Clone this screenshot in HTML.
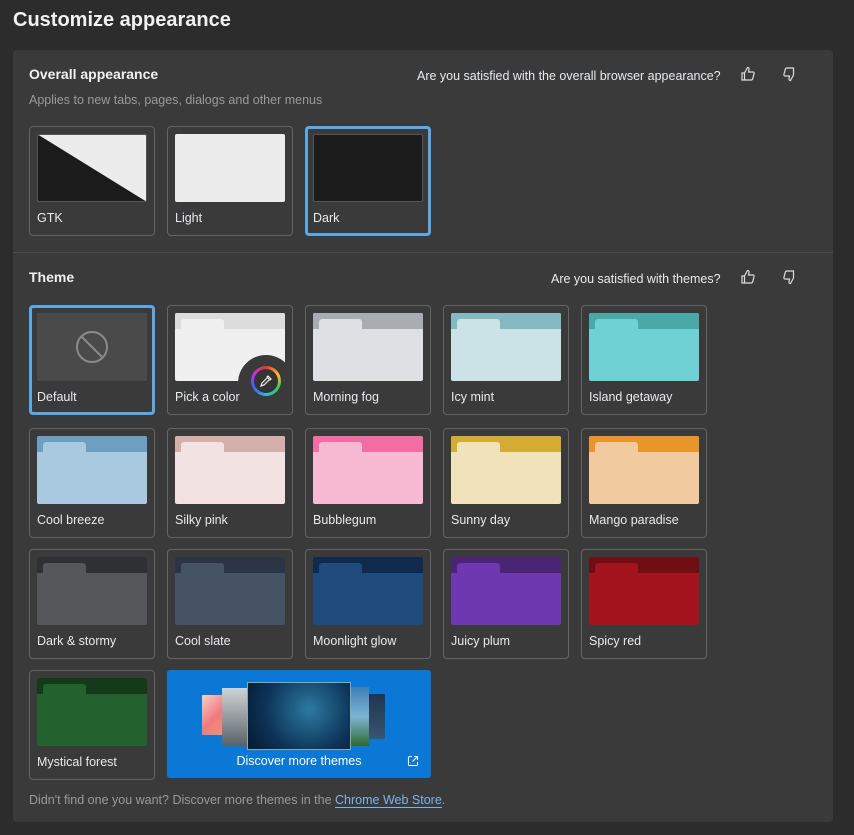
<!DOCTYPE html>
<html><head><style>
*{box-sizing:border-box;margin:0;padding:0}
body{width:854px;height:835px;background:#2c2c2c;font-family:"Liberation Sans",sans-serif;color:#e8eaed;position:relative;overflow:hidden}
.abs{position:absolute}
h1{position:absolute;left:13px;top:9px;font-size:20px;font-weight:bold;color:#f1f1f1}
.card{position:absolute;left:13px;top:50px;width:820px;height:772px;background:#3a3a3a;border-radius:4px}
.t{position:absolute;width:126px;height:110px;border:1px solid #646464;border-radius:4px}
.t.sel{border:3px solid #5aa9e6}
.p{position:absolute;left:7px;top:7px;width:110px;height:68px;border-radius:2px;overflow:hidden}
.t.sel .p{left:5px;top:5px}
.l{position:absolute;left:7px;top:84px;font-size:12.5px;color:#e8eaed}
.t.sel .l{left:5px;top:82px}
.band{position:absolute;left:0;top:0;width:110px;height:16px}
.tab{position:absolute;left:6px;top:6px;width:43px;height:14px;border-radius:3px 3px 0 0}
.q{position:absolute;font-size:12.5px;color:#e8eaed}
.ic{position:absolute}
</style></head><body>
<h1>Customize appearance</h1>
<div class="card"></div>
<div class="abs" style="left:29px;top:66px;font-size:14px;font-weight:bold;color:#f1f1f1">Overall appearance</div>
<div class="abs" style="left:29px;top:93px;font-size:12.5px;color:#9a9a9a">Applies to new tabs, pages, dialogs and other menus</div>
<div class="q" style="left:417px;top:69px">Are you satisfied with the overall browser appearance?</div>
<div class="q" style="left:551px;top:272px">Are you satisfied with themes?</div>
<svg class="ic" style="left:740px;top:66px" width="16" height="16" viewBox="0 0 16 16" fill="none" stroke="#ddd" stroke-width="1.2"><path d="M2 7h2.5v7H2zM4.5 7l3-5.5c1.3 0 1.8.8 1.5 2L8.5 6H13c.8 0 1.3.7 1.1 1.4l-1.4 5.3c-.2.8-.8 1.3-1.6 1.3H4.5"/></svg>
<svg class="ic" style="left:782px;top:66px" width="16" height="16" viewBox="0 0 16 16" fill="none" stroke="#ddd" stroke-width="1.2"><g transform="rotate(180 8 8)"><path d="M4.5 7l3-5.5c1.3 0 1.8.8 1.5 2L8.5 6H13c.8 0 1.3.7 1.1 1.4l-1.4 5.3c-.2.8-.8 1.3-1.6 1.3H4.5V7"/></g></svg>
<svg class="ic" style="left:740px;top:269px" width="16" height="16" viewBox="0 0 16 16" fill="none" stroke="#ddd" stroke-width="1.2"><path d="M2 7h2.5v7H2zM4.5 7l3-5.5c1.3 0 1.8.8 1.5 2L8.5 6H13c.8 0 1.3.7 1.1 1.4l-1.4 5.3c-.2.8-.8 1.3-1.6 1.3H4.5"/></svg>
<svg class="ic" style="left:782px;top:269px" width="16" height="16" viewBox="0 0 16 16" fill="none" stroke="#ddd" stroke-width="1.2"><g transform="rotate(180 8 8)"><path d="M4.5 7l3-5.5c1.3 0 1.8.8 1.5 2L8.5 6H13c.8 0 1.3.7 1.1 1.4l-1.4 5.3c-.2.8-.8 1.3-1.6 1.3H4.5V7"/></g></svg>

<div class="t" style="left:29px;top:126px"><div class="p" style="background:#ececec;border:1px solid #555"><svg width="110" height="68" style="position:absolute;left:-1px;top:-1px"><polygon points="0,0 110,68 0,68" fill="#1b1b1b"/></svg></div><div class="l">GTK</div></div>
<div class="t" style="left:167px;top:126px"><div class="p" style="background:#ececec"></div><div class="l">Light</div></div>
<div class="t sel" style="left:305px;top:126px"><div class="p" style="background:#1c1c1c;border:1px solid #555"></div><div class="l">Dark</div></div>

<div class="abs" style="left:13px;top:252px;width:820px;height:1px;background:#4c4c4c"></div>
<div class="abs" style="left:29px;top:269px;font-size:14px;font-weight:bold;color:#f1f1f1">Theme</div>

<div class="t sel" style="left:29px;top:305px"><div class="p" style="background:#4a4a4a"><svg width="110" height="68"><circle cx="55" cy="34" r="15" fill="none" stroke="#8a8a8a" stroke-width="2"/><line x1="44.5" y1="23.5" x2="65.5" y2="44.5" stroke="#8a8a8a" stroke-width="2"/></svg></div><div class="l">Default</div></div>

<div class="t" style="left:167px;top:305px"><div class="p" style="background:#f0f0f0"><div class="band" style="background:#dcdcdc"></div><div class="tab" style="background:#f0f0f0"></div>
<div class="abs" style="left:63px;top:42px;width:56px;height:56px;border-radius:50%;background:#3a3a3a"></div></div>
<div class="abs" style="left:83px;top:60px;width:30px;height:30px;border-radius:50%;background:conic-gradient(#e33,#fb3,#3c5,#3bd,#36e,#b3e,#e33)"></div>
<div class="abs" style="left:86px;top:63px;width:24px;height:24px;border-radius:50%;background:#333"></div>
<svg class="ic" style="left:91px;top:68px" width="14" height="14" viewBox="0 0 14 14" fill="none" stroke="#eee" stroke-width="1.2"><path d="M9 2l3 3-1 1-3-3zM8 4L3 9l-1 3 3-1 5-5"/></svg>
<div class="l">Pick a color</div></div>

<div class="t" style="left:305px;top:305px"><div class="p" style="background:#dfe0e3"><div class="band" style="background:#a9acb1"></div><div class="tab" style="background:#dfe0e3"></div></div><div class="l">Morning fog</div></div>
<div class="t" style="left:443px;top:305px"><div class="p" style="background:#cbe3e7"><div class="band" style="background:#86b8c1"></div><div class="tab" style="background:#cbe3e7"></div></div><div class="l">Icy mint</div></div>
<div class="t" style="left:581px;top:305px"><div class="p" style="background:#6fd1d3"><div class="band" style="background:#4aa8a8"></div><div class="tab" style="background:#6fd1d3"></div></div><div class="l">Island getaway</div></div>

<div class="t" style="left:29px;top:428px"><div class="p" style="background:#a9c9e0"><div class="band" style="background:#6e9ec0"></div><div class="tab" style="background:#a9c9e0"></div></div><div class="l">Cool breeze</div></div>
<div class="t" style="left:167px;top:428px"><div class="p" style="background:#f2e2e1"><div class="band" style="background:#d5b0ab"></div><div class="tab" style="background:#f2e2e1"></div></div><div class="l">Silky pink</div></div>
<div class="t" style="left:305px;top:428px"><div class="p" style="background:#f8b9d3"><div class="band" style="background:#f26da4"></div><div class="tab" style="background:#f8b9d3"></div></div><div class="l">Bubblegum</div></div>
<div class="t" style="left:443px;top:428px"><div class="p" style="background:#f0e3bc"><div class="band" style="background:#d4ac34"></div><div class="tab" style="background:#f0e3bc"></div></div><div class="l">Sunny day</div></div>
<div class="t" style="left:581px;top:428px"><div class="p" style="background:#f2ca9f"><div class="band" style="background:#e8952c"></div><div class="tab" style="background:#f2ca9f"></div></div><div class="l">Mango paradise</div></div>

<div class="t" style="left:29px;top:549px"><div class="p" style="background:#55575b"><div class="band" style="background:#2f3033"></div><div class="tab" style="background:#55575b"></div></div><div class="l">Dark &amp; stormy</div></div>
<div class="t" style="left:167px;top:549px"><div class="p" style="background:#465365"><div class="band" style="background:#2c3543"></div><div class="tab" style="background:#465365"></div></div><div class="l">Cool slate</div></div>
<div class="t" style="left:305px;top:549px"><div class="p" style="background:#1f4a7c"><div class="band" style="background:#0f2a4a"></div><div class="tab" style="background:#1f4a7c"></div></div><div class="l">Moonlight glow</div></div>
<div class="t" style="left:443px;top:549px"><div class="p" style="background:#6e38b0"><div class="band" style="background:#4b2574"></div><div class="tab" style="background:#6e38b0"></div></div><div class="l">Juicy plum</div></div>
<div class="t" style="left:581px;top:549px"><div class="p" style="background:#a3141e"><div class="band" style="background:#6f0f14"></div><div class="tab" style="background:#a3141e"></div></div><div class="l">Spicy red</div></div>

<div class="t" style="left:29px;top:670px"><div class="p" style="background:#23622e"><div class="band" style="background:#143a1c"></div><div class="tab" style="background:#23622e"></div></div><div class="l">Mystical forest</div></div>

<div class="abs" style="left:167px;top:670px;width:264px;height:108px;background:#0b78d6;border-radius:3px">
 <div class="abs" style="left:35px;top:25px;width:30px;height:40px;background:linear-gradient(135deg,#f7d0c8,#ef7a80 50%,#f49a6a);border-radius:1px"></div>
 <div class="abs" style="left:55px;top:18px;width:40px;height:58px;background:linear-gradient(#cfd3d6,#8a9195 60%,#55606a)"></div>
 <div class="abs" style="left:190px;top:24px;width:28px;height:45px;background:linear-gradient(#1d3550,#3a5570)"></div>
 <div class="abs" style="left:165px;top:17px;width:37px;height:59px;background:linear-gradient(#3d7fb8,#7db4d2 50%,#2d6a30)"></div>
 <div class="abs" style="left:80px;top:12px;width:104px;height:68px;background:radial-gradient(circle at 60% 40%,#2c7aa0,#0d3358 60%,#061a30);border:1px solid #8aa"></div>
 <div class="abs" style="left:0;top:84px;width:264px;text-align:center;font-size:12.5px;color:#fff">Discover more themes</div>
 <svg class="abs" style="left:240px;top:85px" width="12" height="12" viewBox="0 0 12 12" fill="none" stroke="#fff" stroke-width="1.1"><path d="M5 1.5H2.5a1 1 0 0 0-1 1v7a1 1 0 0 0 1 1h7a1 1 0 0 0 1-1V7M7 1.5h3.5V5M10.5 1.5L5.5 6.5"/></svg>
</div>

<div class="abs" style="left:29px;top:793px;font-size:12.5px;color:#9a9a9a">Didn't find one you want? Discover more themes in the <span style="color:#7cb4e8;border-bottom:1px solid #7cb4e8">Chrome Web Store</span>.</div>
</body></html>
